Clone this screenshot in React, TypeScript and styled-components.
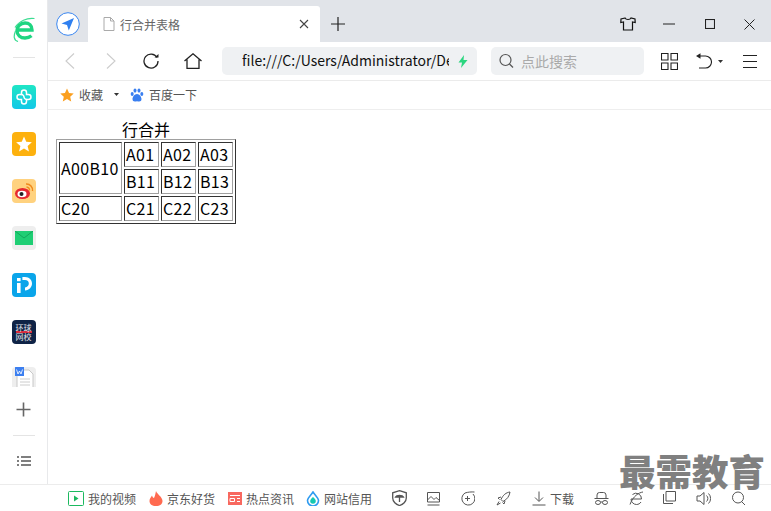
import styled, { createGlobalStyle } from 'styled-components';

const GlobalStyle = createGlobalStyle`
    html, body {
        margin: 0;
        padding: 0;
        height: 100%;
        overflow: hidden;
        background: #fff;
        font-family: "Noto Sans CJK SC", "Noto Sans", sans-serif;
    }
`;

const Window = styled.div`
    position: relative;
    width: 771px;
    height: 511px;
    display: flex;
    flex-direction: column;
    overflow: hidden;
`;

const Main = styled.div`
    display: flex;
    height: 484px;
`;

const Sidebar = styled.aside`
    width: 47px;
    flex: none;
    border-right: 1px solid #e8e9eb;
    display: flex;
    flex-direction: column;
    align-items: center;
    padding-top: 17px;
`;

const SideDivider = styled.div<{ $mt: number }>`
    width: 22px;
    height: 1px;
    margin-top: ${p => p.$mt}px;
    background: #e4e4e4;
    flex: none;
`;

const AppList = styled.div`
    height: 302px;
    margin-top: 27px;
    display: flex;
    flex-direction: column;
    gap: 23px;
    overflow: hidden;
    flex: none;
`;

const AppIcon = styled.div<{ $bg: string }>`
    width: 24px;
    height: 24px;
    flex: none;
    border-radius: 4px;
    background: ${p => p.$bg};
    display: flex;
    align-items: center;
    justify-content: center;
    overflow: hidden;
`;

const NewsLabel = styled.span`
    color: #e8e8f0;
    font-size: 8px;
    line-height: 9px;
    width: 16px;
    text-align: center;
    background: linear-gradient(transparent 8px, #d8283a 8px, #d8283a 10px, transparent 10px);
`;

const SideGlyph = styled.svg<{ $mt: number }>`
    flex: none;
    margin-top: ${p => p.$mt}px;
`;

const Column = styled.div`
    flex: 1;
    min-width: 0;
    display: flex;
    flex-direction: column;
`;

const TabStrip = styled.div`
    height: 42px;
    flex: none;
    background: #e1e4e9;
    display: flex;
    align-items: flex-end;
    padding-left: 8px;
`;

const NavBadge = styled.div`
    width: 24px;
    height: 24px;
    margin-bottom: 6px;
    flex: none;
`;

const Tab = styled.div`
    width: 232px;
    height: 36px;
    margin-left: 8px;
    background: #fff;
    border-radius: 3px 3px 0 0;
    display: flex;
    align-items: center;
    padding-left: 15px;
    padding-right: 11px;
    box-sizing: border-box;
    flex: none;
`;

const TabTitle = styled.span`
    flex: 1;
    margin-left: 5px;
    font-size: 12px;
    color: #666;
`;

const StripButton = styled.div<{ $w: number; $ml?: number }>`
    width: ${p => p.$w}px;
    margin-left: ${p => p.$ml ?? 0}px;
    height: 36px;
    display: flex;
    align-items: center;
    justify-content: center;
    flex: none;
`;

const Toolbar = styled.div`
    height: 38px;
    flex: none;
    border-bottom: 1px solid #ebebeb;
    display: flex;
    align-items: center;
`;

const ToolButton = styled.div<{ $w: number; $ml?: number }>`
    width: ${p => p.$w}px;
    margin-left: ${p => p.$ml ?? 0}px;
    display: flex;
    align-items: center;
    justify-content: center;
    flex: none;
`;

const AddressBar = styled.div`
    width: 255px;
    height: 28px;
    margin-left: 20px;
    box-sizing: border-box;
    padding: 0 9px 0 20px;
    background: #eff1f3;
    border-radius: 5px;
    display: flex;
    align-items: center;
    flex: none;
`;

const AddressText = styled.span`
    flex: 1;
    min-width: 0;
    overflow: hidden;
    white-space: nowrap;
    font-size: 14px;
    line-height: 20px;
    padding-bottom: 2px;
    color: #111;
`;

const BoltIcon = styled.svg`
    margin-left: 9px;
    flex: none;
`;

const SearchBox = styled.div`
    width: 153px;
    height: 28px;
    margin-left: 14px;
    box-sizing: border-box;
    padding-left: 7px;
    background: #eff1f3;
    border-radius: 5px;
    display: flex;
    align-items: center;
    gap: 7px;
    flex: none;
`;

const Placeholder = styled.span`
    font-size: 14px;
    color: #aaa;
`;

const Bookmarks = styled.div`
    height: 29px;
    flex: none;
    box-sizing: border-box;
    padding: 0 0 1px 12px;
    border-bottom: 1px solid #eeeeee;
    display: flex;
    align-items: center;
    font-size: 12px;
    color: #555;
`;

const Bookmark = styled.div<{ $ml?: number }>`
    display: flex;
    align-items: center;
    gap: 5px;
    margin-left: ${p => p.$ml ?? 0}px;
`;

const Caret = styled.svg`
    margin-left: 11px;
    flex: none;
`;

const Page = styled.div`
    flex: 1;
    padding: 8px;
    font-size: 16px;
    color: #000;
`;

const Table = styled.table`
    border: 1px solid;
    border-color: #a0a0a0 #333 #333 #a0a0a0;
    border-spacing: 2px;
    border-collapse: separate;
    table-layout: fixed;
    width: 180px;
    line-height: 21px;
`;

const Caption = styled.caption`
    color: #000;
    text-align: center;
    line-height: 19px;
    padding-top: 2px;
`;

const FirstCol = styled.col`
    width: 63px;
`;

const Cell = styled.td`
    border: 1px solid;
    border-color: #333 #a0a0a0 #a0a0a0 #333;
    padding: 1px;
    white-space: nowrap;
    letter-spacing: 0.3px;
`;

const StatusBar = styled.footer`
    height: 26px;
    flex: none;
    border-top: 1px solid #ececec;
    display: flex;
    align-items: center;
    padding-left: 68px;
    font-size: 12px;
    color: #555;
`;

const StatusItem = styled.div<{ $ml?: number }>`
    display: flex;
    align-items: center;
    gap: 4px;
    margin-left: ${p => p.$ml ?? 0}px;
    flex: none;
`;

const Watermark = styled.div`
    position: absolute;
    left: 619px;
    top: 449px;
    font-size: 36.5px;
    line-height: 44px;
    font-weight: 900;
    color: #808080;
    white-space: nowrap;
`;

const Line = { fill: 'none', stroke: '#555', strokeWidth: 1 } as const;
const Dark = { fill: 'none', stroke: '#222', strokeWidth: 1.3 } as const;

const StatusIcon = ({ d, w = 15 }: { d: string; w?: number }) => (
    <svg width={w} height={15} viewBox={`0 0 ${w} 15`} {...Line}>
        <path d={d} />
    </svg>
);

const App = () => (
    <Window>
        <GlobalStyle />
        <Main>
            <Sidebar>
                <SideGlyph $mt={0} width="24" height="25" viewBox="0 0 24 25" fill="none">
                    <path d="M4.5 13 H20 C20 8.5 17 6 13 6 C8.5 6 5 9.2 5 13.5 C5 18 8.5 21 13 21 C15.5 21 17.8 20.2 19.5 18.8" stroke="#1fd581" strokeWidth="3.4" />
                    <path d="M22.5 1.5 C15 .5 7 4 3 10.5" stroke="#3cdc92" strokeWidth="1.2" />
                    <path d="M3.5 14 C1.5 19 1.5 23 6 24.5" stroke="#3cdc92" strokeWidth="1.2" />
                </SideGlyph>
                <SideDivider $mt={15} />
                <AppList>
                    <AppIcon $bg="linear-gradient(#1fe6c5, #12c8e8)">
                        <svg width="18" height="18" viewBox="0 0 18 18" fill="none" stroke="#fff" strokeWidth="1.5">
                            <path d="M6.5 4.5 a2.5 2.5 0 0 1 5 0 V6.5 H13.5 a2.5 2.5 0 0 1 0 5 H11.5 V13.5 a2.5 2.5 0 0 1 -5 0 V11.5 H4.5 a2.5 2.5 0 0 1 0 -5 H6.5 Z" />
                            <path d="M6.5 6.5 C8 6.5 9 8 9 9 C9 10 10 11.5 11.5 11.5" />
                        </svg>
                    </AppIcon>
                    <AppIcon $bg="#fdb10e">
                        <svg width="18" height="18" viewBox="0 0 24 24" fill="#fff">
                            <path d="M12 2 L15 9 L22.5 9.6 L16.8 14.5 L18.6 22 L12 18 L5.4 22 L7.2 14.5 L1.5 9.6 L9 9 Z" />
                        </svg>
                    </AppIcon>
                    <AppIcon $bg="#ffd27f">
                        <svg width="22" height="22" viewBox="0 0 22 22">
                            <ellipse cx="9.5" cy="13.5" rx="7.5" ry="5.5" fill="#e6282f" />
                            <ellipse cx="9" cy="14" rx="4.5" ry="3.3" fill="#fff" />
                            <circle cx="8.5" cy="14" r="2" fill="#222" />
                            <path d="M13 4 A6 6 0 0 1 19.5 11 M13.5 7 A3.2 3.2 0 0 1 16.5 10.5" fill="none" stroke="#f08a1d" strokeWidth="1.5" />
                        </svg>
                    </AppIcon>
                    <AppIcon $bg="#eeeeee">
                        <svg width="18" height="14" viewBox="0 0 18 14">
                            <rect width="18" height="14" fill="#1fce74" />
                            <path d="M0 0 L9 7 L18 0" fill="none" stroke="#12a85a" strokeWidth="1" />
                        </svg>
                    </AppIcon>
                    <AppIcon $bg="#0aa5ea">
                        <svg width="20" height="20" viewBox="0 0 20 20" fill="#fff">
                            <rect x="3" y="8" width="3.6" height="10" />
                            <rect x="3" y="3" width="3.6" height="3.2" />
                            <path d="M8.4 2 H11 C15.5 2 18 5 18 8.5 C18 12 15.5 15 11 15.5 V12.5 C13.5 12 14.8 10.5 14.8 8.5 C14.8 6.5 13.5 5 11 5 H8.4 Z" />
                        </svg>
                    </AppIcon>
                    <AppIcon $bg="#0f2346">
                        <NewsLabel>环球网校</NewsLabel>
                    </AppIcon>
                    <AppIcon $bg="#eeeeee">
                        <svg width="20" height="24" viewBox="0 0 20 24">
                            <path d="M3 3 H15 L19 7 V24 H3 Z" fill="#fff" stroke="#c8c8c8" />
                            <path d="M6 12 H16 M6 15 H16 M6 18 H16" stroke="#ccc" />
                            <rect x="1" y="0" width="9" height="9" fill="#3c7ff0" />
                            <path d="M2.5 2.5 L4 7 L5.5 4 L7 7 L8.5 2.5" fill="none" stroke="#fff" strokeWidth="0.8" />
                        </svg>
                    </AppIcon>
                </AppList>
                <SideGlyph $mt={15} width="15" height="15" viewBox="0 0 15 15" fill="none" stroke="#666" strokeWidth="1.6">
                    <path d="M0.5 7.5 H14.5 M7.5 0.5 V14.5" />
                </SideGlyph>
                <SideDivider $mt={18} />
                <SideGlyph $mt={20} width="14" height="10" viewBox="0 0 14 10" fill="none" stroke="#555" strokeWidth="1.5">
                    <path d="M0 1 H2 M4 1 H14 M0 5 H2 M4 5 H14 M0 9 H2 M4 9 H14" />
                </SideGlyph>
            </Sidebar>
            <Column>
                <TabStrip>
                    <NavBadge>
                        <svg width="24" height="24" viewBox="0 0 24 24">
                            <circle cx="12" cy="12" r="11.3" fill="#fff" stroke="#3a86f0" strokeWidth="1" />
                            <path d="M18 6 L5.5 11.5 L11 13 L12.8 18.5 Z" fill="#2f80f0" />
                        </svg>
                    </NavBadge>
                    <Tab>
                        <svg width="12" height="14" viewBox="0 0 12 14" fill="#fff" stroke="#aaa">
                            <path d="M1 .5 H7.5 L11 4 V13.5 H1 Z M7.5 .5 V4 H11" />
                        </svg>
                        <TabTitle>行合并表格</TabTitle>
                        <svg width="10" height="10" viewBox="0 0 10 10" fill="none" stroke="#444" strokeWidth="1.1">
                            <path d="M1 1 L9 9 M9 1 L1 9" />
                        </svg>
                    </Tab>
                    <StripButton $w={14} $ml={11}>
                        <svg width="14" height="14" viewBox="0 0 14 14" fill="none" stroke="#222" strokeWidth="1.2">
                            <path d="M0 7 H14 M7 0 V14" />
                        </svg>
                    </StripButton>
                    <StripButton $w={16} $ml={275}>
                        <svg width="16" height="14" viewBox="0 0 16 14" fill="none" stroke="#111" strokeWidth="1.2">
                            <path d="M5 1 L1 2 L.8 5.5 L3.5 5 V13 H12.5 V5 L15.2 5.5 L15 2 L11 1 C10 3 6 3 5 1 Z" />
                        </svg>
                    </StripButton>
                    <StripButton $w={12} $ml={27}>
                        <svg width="12" height="2" viewBox="0 0 12 2" stroke="#222">
                            <path d="M0 1 H12" />
                        </svg>
                    </StripButton>
                    <StripButton $w={10} $ml={30}>
                        <svg width="10" height="10" viewBox="0 0 10 10" fill="none" stroke="#222" strokeWidth="1.1">
                            <rect x=".5" y=".5" width="9" height="9" />
                        </svg>
                    </StripButton>
                    <StripButton $w={11} $ml={29}>
                        <svg width="11" height="11" viewBox="0 0 11 11" fill="none" stroke="#222" strokeWidth="1">
                            <path d="M.5 .5 L10.5 10.5 M10.5 .5 L.5 10.5" />
                        </svg>
                    </StripButton>
                </TabStrip>
                <Toolbar>
                    <ToolButton $w={12} $ml={16}>
                        <svg width="10" height="16" viewBox="0 0 10 16" fill="none" stroke="#ccc" strokeWidth="1.1">
                            <path d="M9 .5 L1 8 L9 15.5" />
                        </svg>
                    </ToolButton>
                    <ToolButton $w={12} $ml={29}>
                        <svg width="10" height="16" viewBox="0 0 10 16" fill="none" stroke="#ccc" strokeWidth="1.1">
                            <path d="M1 .5 L9 8 L1 15.5" />
                        </svg>
                    </ToolButton>
                    <ToolButton $w={16} $ml={26}>
                        <svg width="16" height="16" viewBox="0 0 16 16" {...Dark}>
                            <path d="M14 4.5 A7 7 0 1 0 15 8" />
                            <path d="M11.5 4.5 H15.5 V1 Z" fill="#222" stroke="none" />
                        </svg>
                    </ToolButton>
                    <ToolButton $w={18} $ml={25}>
                        <svg width="18" height="16" viewBox="0 0 18 16" {...Dark}>
                            <path d="M.5 8 L9 .8 L17.5 8 M3 6.5 V15.3 H15 V6.5" />
                        </svg>
                    </ToolButton>
                    <AddressBar>
                        <AddressText>file:///C:/Users/Administrator/Desktop</AddressText>
                        <BoltIcon width="10" height="13" viewBox="0 0 10 13" fill="#2ad67f">
                            <path d="M6 0 L0.5 7.5 H4 L3 13 L9.5 5 H5.5 Z" />
                        </BoltIcon>
                    </AddressBar>
                    <SearchBox>
                        <svg width="16" height="16" viewBox="0 0 16 16" fill="none" stroke="#555" strokeWidth="1.2">
                            <circle cx="7.5" cy="7" r="5.5" />
                            <path d="M11.5 11 L15 14.5" />
                        </svg>
                        <Placeholder>点此搜索</Placeholder>
                    </SearchBox>
                    <ToolButton $w={17} $ml={17}>
                        <svg width="17" height="17" viewBox="0 0 17 17" fill="none" stroke="#222" strokeWidth="1.1">
                            <path d="M.5 .5 H7 V7 H.5 Z M10 .5 H16.5 V7 H10 Z M.5 10 H7 V16.5 H.5 Z M10 10 H16.5 V16.5 H10 Z" />
                        </svg>
                    </ToolButton>
                    <ToolButton $w={16} $ml={18}>
                        <svg width="16" height="16" viewBox="0 0 16 16" fill="none" stroke="#222" strokeWidth="1.1">
                            <path d="M3 3 H9.5 A5.8 5.8 0 0 1 9.5 15 H3" />
                            <path d="M0 3 L4.5 .3 V5.7 Z" fill="#222" stroke="none" />
                        </svg>
                    </ToolButton>
                    <ToolButton $w={5} $ml={6}>
                        <svg width="5" height="3" viewBox="0 0 5 3" fill="#333">
                            <path d="M0 0 H5 L2.5 3 Z" />
                        </svg>
                    </ToolButton>
                    <ToolButton $w={14} $ml={20}>
                        <svg width="14" height="13" viewBox="0 0 14 13" stroke="#222">
                            <path d="M0 .5 H14 M0 6.5 H14 M0 12.5 H14" />
                        </svg>
                    </ToolButton>
                </Toolbar>
                <Bookmarks>
                    <Bookmark>
                        <svg width="14" height="14" viewBox="0 0 24 24" fill="#fb9f1e">
                            <path d="M12 1 L15.5 8.6 L23.5 9.5 L17.5 15 L19.2 23 L12 19 L4.8 23 L6.5 15 L.5 9.5 L8.5 8.6 Z" />
                        </svg>
                        <span>收藏</span>
                    </Bookmark>
                    <Caret width="5" height="3" viewBox="0 0 5 3" fill="#333">
                        <path d="M0 0 H5 L2.5 3 Z" />
                    </Caret>
                    <Bookmark $ml={11}>
                        <svg width="14" height="14" viewBox="0 0 14 14" fill="#3a7ff0">
                            <ellipse cx="2.2" cy="6" rx="1.5" ry="2" />
                            <ellipse cx="5" cy="2.6" rx="1.5" ry="2.1" />
                            <ellipse cx="9" cy="2.6" rx="1.5" ry="2.1" />
                            <ellipse cx="11.8" cy="6" rx="1.5" ry="2" />
                            <path d="M7 6 C4.5 6 2.5 9 2.5 11 C2.5 14 5 13.5 7 13.2 C9 13.5 11.5 14 11.5 11 C11.5 9 9.5 6 7 6 Z" />
                        </svg>
                        <span>百度一下</span>
                    </Bookmark>
                </Bookmarks>
                <Page>
                    <Table>
                        <Caption>行合并</Caption>
                        <colgroup>
                            <FirstCol />
                            <col />
                            <col />
                            <col />
                        </colgroup>
                        <tbody>
                            <tr>
                                <Cell rowSpan={2}>A00B10</Cell>
                                <Cell>A01</Cell>
                                <Cell>A02</Cell>
                                <Cell>A03</Cell>
                            </tr>
                            <tr>
                                <Cell>B11</Cell>
                                <Cell>B12</Cell>
                                <Cell>B13</Cell>
                            </tr>
                            <tr>
                                <Cell>C20</Cell>
                                <Cell>C21</Cell>
                                <Cell>C22</Cell>
                                <Cell>C23</Cell>
                            </tr>
                        </tbody>
                    </Table>
                </Page>
            </Column>
        </Main>
        <StatusBar>
            <StatusItem>
                <svg width="16" height="15" viewBox="0 0 16 15" fill="none" stroke="#1cb95f" strokeWidth="1">
                    <rect x=".5" y=".5" width="15" height="14" rx="1" />
                    <path d="M6 4.5 L10.5 7.5 L6 10.5 Z" fill="#1cb95f" stroke="none" />
                </svg>
                <span>我的视频</span>
            </StatusItem>
            <StatusItem $ml={13}>
                <svg width="14" height="15" viewBox="0 0 14 15" fill="#ff6a50">
                    <path d="M7 0 C8 3 13.5 6 13.5 10 C13.5 13 11 15 7 15 C3 15 .5 13 .5 10 C.5 7.5 2 6 3 4.5 C3.5 6 4 7 5 7 C6 5 6.5 2.5 7 0 Z" />
                </svg>
                <span>京东好货</span>
            </StatusItem>
            <StatusItem $ml={13}>
                <svg width="14" height="13" viewBox="0 0 14 13">
                    <rect width="14" height="13" fill="#f8685f" />
                    <path d="M2 3.5 H12 M2 6.5 H6.5 V9.5 H2 Z M9 6.5 H12 M9 9.5 H12" fill="none" stroke="#fff" />
                </svg>
                <span>热点资讯</span>
            </StatusItem>
            <StatusItem $ml={12}>
                <svg width="14" height="15" viewBox="0 0 14 15" fill="none">
                    <path d="M7 1 C9 4 12.5 7 12.5 9.5 A5.5 5.5 0 0 1 1.5 9.5 C1.5 7 5 4 7 1 Z" stroke="#2e9bf0" strokeWidth="1.6" />
                    <path d="M7 6 C8.5 7.5 9.8 8.8 9.8 10 A2.8 2.8 0 0 1 4.2 10 C4.2 8.8 5.5 7.5 7 6 Z" fill="#16c9b0" />
                </svg>
                <span>网站信用</span>
            </StatusItem>
            <StatusItem $ml={20}>
                <svg width="15" height="16" viewBox="0 0 15 16" fill="none" stroke="#555" strokeWidth="1.3">
                    <path d="M7.5 .7 L14.3 2.8 V8 C14.3 11.5 11 14.5 7.5 15.5 C4 14.5 .7 11.5 .7 8 V2.8 Z" />
                    <path d="M3.5 7 C4.5 5 10.5 5 11.5 7 Z M7.5 6 V12" />
                </svg>
            </StatusItem>
            <StatusItem $ml={19}>
                <StatusIcon d="M1.5 1.5 H13.5 V11 H1.5 Z M1.5 9 L5 5.5 L8 8.5 L10 6.5 L13.5 9.5 M1.5 14 H13.5" />
            </StatusItem>
            <StatusItem $ml={19}>
                <StatusIcon d="M13 3 A6.5 6.5 0 1 1 5 2 M5 2 C8 1 11.5 .8 14.5 1 M7.5 5 V10 M5 7.5 H10" />
            </StatusItem>
            <StatusItem $ml={21}>
                <StatusIcon d="M14 1 C10 1.5 7 4 5 8.5 L7 10.5 C11 8.5 13.5 5 14 1 Z M5 6 L2 7 L3.5 8.5 M9 10 L8 13 L6.5 11.5 M3 10.5 L1 14 L4.5 12" />
            </StatusItem>
            <StatusItem $ml={21}>
                <StatusIcon w={14} d="M7 .5 V10 M3 6.5 L7 10.5 L11 6.5 M.5 14 H13.5" />
                <span>下载</span>
            </StatusItem>
            <StatusItem $ml={20}>
                <StatusIcon d="M3 7 V4 A2.5 2.5 0 0 1 5.5 1.5 H9.5 A2.5 2.5 0 0 1 12 4 V7 M.5 7.5 H14.5 M1.5 11.5 A2.5 2 0 1 0 6.5 11.5 A2.5 2 0 1 0 1.5 11.5 M8.5 11.5 A2.5 2 0 1 0 13.5 11.5 A2.5 2 0 1 0 8.5 11.5 M6.5 11 H8.5" />
            </StatusItem>
            <StatusItem $ml={20}>
                <StatusIcon d="M2 8 H12.5 A5.5 5.5 0 0 0 3.5 3.5 M2 8 C2 11 4.5 13.5 7.5 13.5 C9.5 13.5 11 12.5 12 11 M14 1 C10 1.5 4 5 1 13.5" />
            </StatusItem>
            <StatusItem $ml={19}>
                <StatusIcon w={13} d="M3 .5 H12.5 V10 H3 Z M.5 3 V12.5 H10" />
            </StatusItem>
            <StatusItem $ml={20}>
                <StatusIcon d="M1 5 H4 L8 1.5 V13.5 L4 10 H1 Z M10.5 4.5 A4 4 0 0 1 10.5 10.5 M12.5 2.5 A7 7 0 0 1 12.5 12.5" />
            </StatusItem>
            <StatusItem $ml={20}>
                <StatusIcon d="M1.5 6.5 A5.5 5.5 0 1 0 12.5 6.5 A5.5 5.5 0 1 0 1.5 6.5 M10.5 10.5 L14 14" />
            </StatusItem>
        </StatusBar>
        <Watermark>最需教育</Watermark>
    </Window>
);

export default App;
